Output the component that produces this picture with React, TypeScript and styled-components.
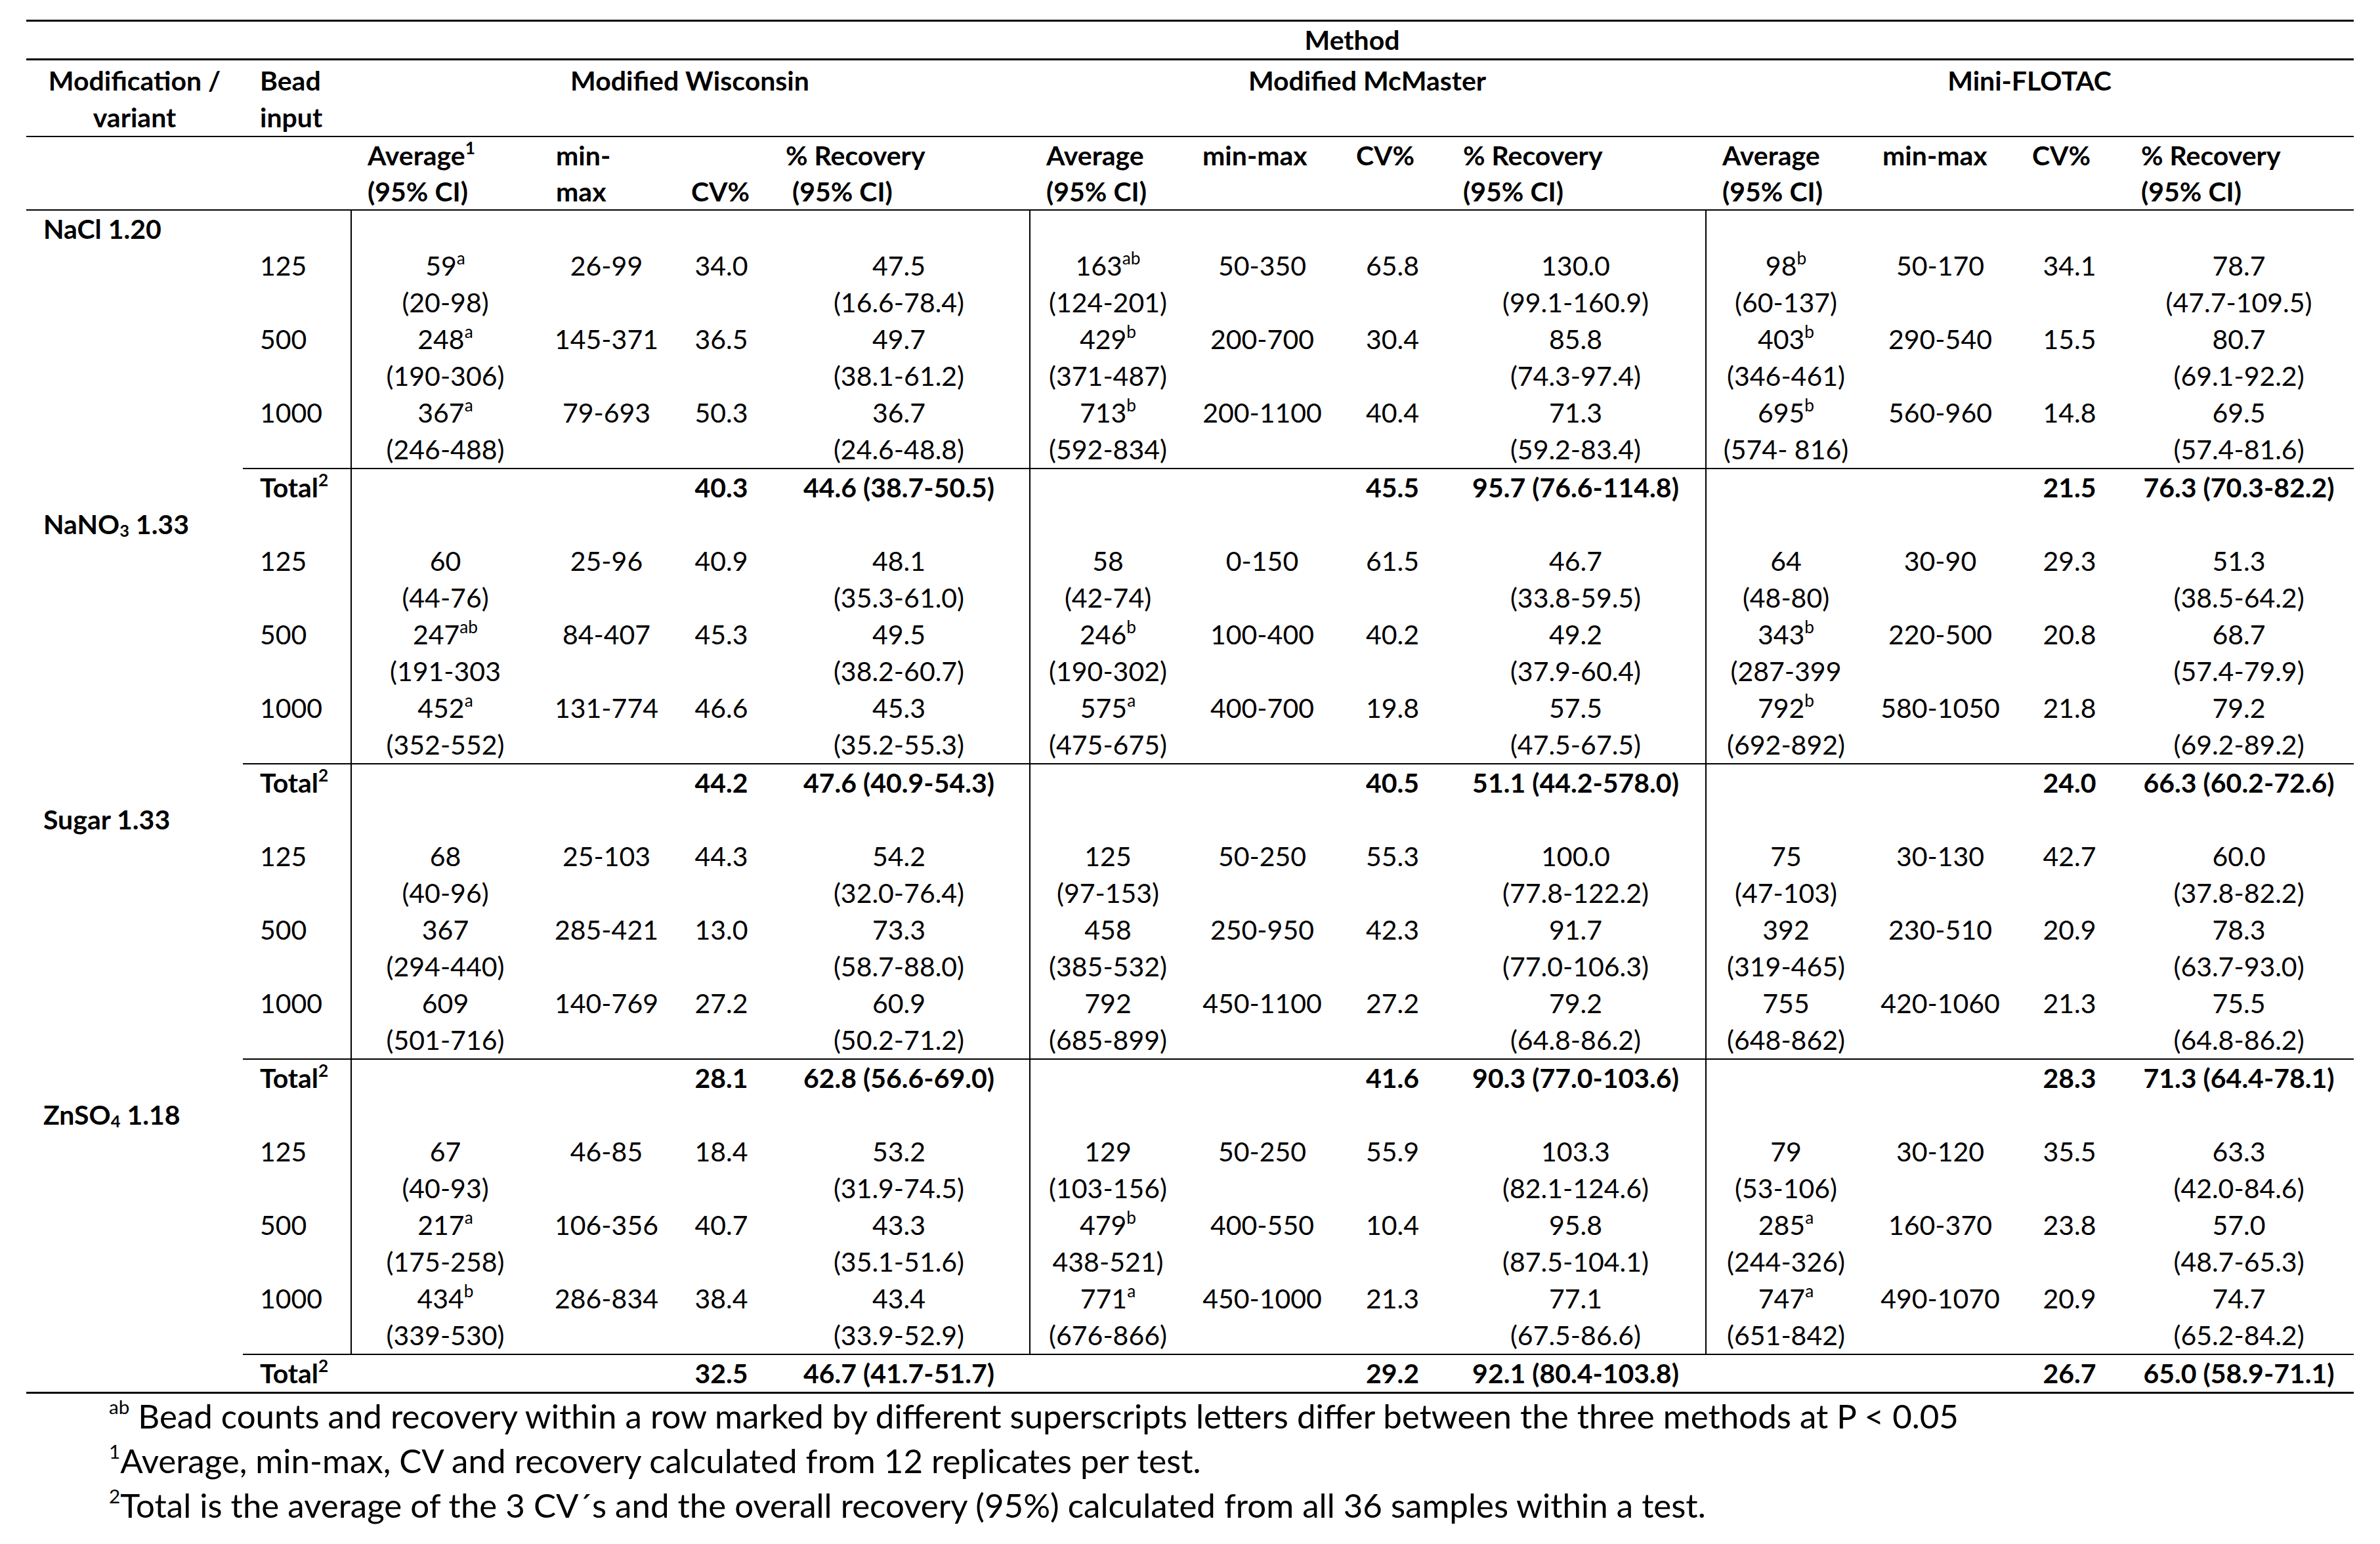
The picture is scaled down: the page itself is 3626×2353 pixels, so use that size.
import React from "react";
import styled, { createGlobalStyle } from "styled-components";

const GlobalStyle = createGlobalStyle`
  html, body {
    margin: 0;
    padding: 0;
    background: #ffffff;
  }
  body {
    font-family: Lato, "Open Sans", "Liberation Sans", sans-serif;
    color: #000;
  }
`;

const Page = styled.div`
  padding: 30px 0 0 40px;
  width: 3546px;
`;

const Table = styled.table`
  table-layout: fixed;
  width: 3546px;
  border-collapse: separate;
  border-spacing: 0;
  border-top: 3px solid #000;
  font-family: Lato, "Open Sans", sans-serif;
  font-size: 41px;
  line-height: 56px;
  color: #000;
`;

const Col = styled.col<{ $w: number }>`
  width: ${(p) => p.$w}px;
`;

const HeadCell = styled.th<{
  $align?: "left" | "center";
  $valign?: "top" | "bottom";
  $rule?: number;
  $padTop?: number;
  $lh?: number;
}>`
  font-weight: 700;
  text-align: ${(p) => p.$align ?? "left"};
  vertical-align: ${(p) => p.$valign ?? "top"};
  padding: ${(p) => p.$padTop ?? 0}px 0 0 ${(p) => (p.$align === "center" ? 0 : 26)}px;
  border-bottom: ${(p) => p.$rule ?? 2}px solid #000;
  white-space: nowrap;
  line-height: ${(p) => p.$lh ?? 56}px;
`;

const BodyCell = styled.td<{
  $divider?: boolean;
  $rule?: boolean;
  $bottom?: boolean;
  $bold?: boolean;
  $left?: number;
}>`
  padding: 0 0 0 ${(p) => p.$left ?? 0}px;
  text-align: ${(p) => (p.$left !== undefined ? "left" : "center")};
  vertical-align: top;
  white-space: nowrap;
  font-weight: ${(p) => (p.$bold ? 700 : 400)};
  border-left: ${(p) => (p.$divider ? "2px solid #000" : "none")};
  border-top: ${(p) => (p.$rule ? "2px solid #000" : "none")};
  border-bottom: ${(p) => (p.$bottom ? "3px solid #000" : "none")};
`;

const Sup = styled.sup`
  font-size: 0.64em;
  line-height: 0;
  vertical-align: baseline;
  position: relative;
  top: -0.65em;
`;

const Sub = styled.sub`
  font-size: 0.62em;
  line-height: 0;
  vertical-align: baseline;
  position: relative;
  top: 0.15em;
`;

const Notes = styled.div`
  padding-left: 126px;
  font-family: Lato, "Open Sans", sans-serif;
  font-size: 51px;
  line-height: 68px;
  color: #000;
`;

const NoteLine = styled.div`
  white-space: nowrap;
`;

const NoteSup = styled.sup`
  font-size: 0.58em;
  line-height: 0;
  vertical-align: baseline;
  position: relative;
  top: -0.75em;
`;

const WIDTHS = [
  [287, 206, 144, 397],
  [238, 234, 163, 395],
  [244, 228, 166, 350],
];

type Group = {
  label: React.ReactNode;
  rows: { bead: string; cells: string[] }[];
  totals: string[];
};

const GROUPS: Group[] = [
  {
    label: <>NaCl 1.20</>,
    rows: [
      {
        bead: "125",
        cells: [
          "59|a|(20-98)|26-99|34.0|47.5|(16.6-78.4)",
          "163|ab|(124-201)|50-350|65.8|130.0|(99.1-160.9)",
          "98|b|(60-137)|50-170|34.1|78.7|(47.7-109.5)",
        ],
      },
      {
        bead: "500",
        cells: [
          "248|a|(190-306)|145-371|36.5|49.7|(38.1-61.2)",
          "429|b|(371-487)|200-700|30.4|85.8|(74.3-97.4)",
          "403|b|(346-461)|290-540|15.5|80.7|(69.1-92.2)",
        ],
      },
      {
        bead: "1000",
        cells: [
          "367|a|(246-488)|79-693|50.3|36.7|(24.6-48.8)",
          "713|b|(592-834)|200-1100|40.4|71.3|(59.2-83.4)",
          "695|b|(574- 816)|560-960|14.8|69.5|(57.4-81.6)",
        ],
      },
    ],
    totals: ["40.3|44.6 (38.7-50.5)", "45.5|95.7 (76.6-114.8)", "21.5|76.3 (70.3-82.2)"],
  },
  {
    label: (
      <>
        NaNO<Sub>3</Sub> 1.33
      </>
    ),
    rows: [
      {
        bead: "125",
        cells: [
          "60||(44-76)|25-96|40.9|48.1|(35.3-61.0)",
          "58||(42-74)|0-150|61.5|46.7|(33.8-59.5)",
          "64||(48-80)|30-90|29.3|51.3|(38.5-64.2)",
        ],
      },
      {
        bead: "500",
        cells: [
          "247|ab|(191-303|84-407|45.3|49.5|(38.2-60.7)",
          "246|b|(190-302)|100-400|40.2|49.2|(37.9-60.4)",
          "343|b|(287-399|220-500|20.8|68.7|(57.4-79.9)",
        ],
      },
      {
        bead: "1000",
        cells: [
          "452|a|(352-552)|131-774|46.6|45.3|(35.2-55.3)",
          "575|a|(475-675)|400-700|19.8|57.5|(47.5-67.5)",
          "792|b|(692-892)|580-1050|21.8|79.2|(69.2-89.2)",
        ],
      },
    ],
    totals: ["44.2|47.6 (40.9-54.3)", "40.5|51.1 (44.2-578.0)", "24.0|66.3 (60.2-72.6)"],
  },
  {
    label: <>Sugar 1.33</>,
    rows: [
      {
        bead: "125",
        cells: [
          "68||(40-96)|25-103|44.3|54.2|(32.0-76.4)",
          "125||(97-153)|50-250|55.3|100.0|(77.8-122.2)",
          "75||(47-103)|30-130|42.7|60.0|(37.8-82.2)",
        ],
      },
      {
        bead: "500",
        cells: [
          "367||(294-440)|285-421|13.0|73.3|(58.7-88.0)",
          "458||(385-532)|250-950|42.3|91.7|(77.0-106.3)",
          "392||(319-465)|230-510|20.9|78.3|(63.7-93.0)",
        ],
      },
      {
        bead: "1000",
        cells: [
          "609||(501-716)|140-769|27.2|60.9|(50.2-71.2)",
          "792||(685-899)|450-1100|27.2|79.2|(64.8-86.2)",
          "755||(648-862)|420-1060|21.3|75.5|(64.8-86.2)",
        ],
      },
    ],
    totals: ["28.1|62.8 (56.6-69.0)", "41.6|90.3 (77.0-103.6)", "28.3|71.3 (64.4-78.1)"],
  },
  {
    label: (
      <>
        ZnSO<Sub>4</Sub> 1.18
      </>
    ),
    rows: [
      {
        bead: "125",
        cells: [
          "67||(40-93)|46-85|18.4|53.2|(31.9-74.5)",
          "129||(103-156)|50-250|55.9|103.3|(82.1-124.6)",
          "79||(53-106)|30-120|35.5|63.3|(42.0-84.6)",
        ],
      },
      {
        bead: "500",
        cells: [
          "217|a|(175-258)|106-356|40.7|43.3|(35.1-51.6)",
          "479|b|438-521)|400-550|10.4|95.8|(87.5-104.1)",
          "285|a|(244-326)|160-370|23.8|57.0|(48.7-65.3)",
        ],
      },
      {
        bead: "1000",
        cells: [
          "434|b|(339-530)|286-834|38.4|43.4|(33.9-52.9)",
          "771|a|(676-866)|450-1000|21.3|77.1|(67.5-86.6)",
          "747|a|(651-842)|490-1070|20.9|74.7|(65.2-84.2)",
        ],
      },
    ],
    totals: ["32.5|46.7 (41.7-51.7)", "29.2|92.1 (80.4-103.8)", "26.7|65.0 (58.9-71.1)"],
  },
];

function MethodCells({ spec }: { spec: string }) {
  const [avg, sup, ci, mm, cv, rec, recCi] = spec.split("|");
  return (
    <>
      <BodyCell $divider>
        {avg}
        {sup ? <Sup>{sup}</Sup> : null}
        <br />
        {ci}
      </BodyCell>
      <BodyCell>{mm}</BodyCell>
      <BodyCell>{cv}</BodyCell>
      <BodyCell>
        {rec}
        <br />
        {recCi}
      </BodyCell>
    </>
  );
}

function GroupRows({ group, last }: { group: Group; last: boolean }) {
  return (
    <>
      <tr>
        <BodyCell $left={26} $bold>
          {group.label}
        </BodyCell>
        <BodyCell />
        {[0, 1, 2].map((m) => (
          <React.Fragment key={m}>
            <BodyCell $divider />
            <BodyCell />
            <BodyCell />
            <BodyCell />
          </React.Fragment>
        ))}
      </tr>
      {group.rows.map((r) => (
        <tr key={r.bead}>
          <BodyCell />
          <BodyCell $left={26}>{r.bead}</BodyCell>
          {r.cells.map((c, i) => (
            <MethodCells key={i} spec={c} />
          ))}
        </tr>
      ))}
      <tr>
        <BodyCell $bottom={last} />
        <BodyCell $left={26} $bold $rule $bottom={last}>
          Total<Sup>2</Sup>
        </BodyCell>
        {group.totals.map((t, i) => {
          const [cv, rec] = t.split("|");
          return (
            <React.Fragment key={i}>
              <BodyCell $divider={!last} $rule $bottom={last} />
              <BodyCell $rule $bottom={last} />
              <BodyCell $rule $bottom={last} $bold>
                {cv}
              </BodyCell>
              <BodyCell $rule $bottom={last} $bold>
                {rec}
              </BodyCell>
            </React.Fragment>
          );
        })}
      </tr>
    </>
  );
}

const METHODS = ["Modified Wisconsin", "Modified McMaster", "Mini-FLOTAC"];

export default function App() {
  return (
    <>
      <GlobalStyle />
      <Page>
        <Table>
          <colgroup>
            <Col $w={330} />
            <Col $w={164} />
            {WIDTHS.flat().map((w, i) => (
              <Col key={i} $w={w} />
            ))}
          </colgroup>
          <thead>
            <tr>
              <HeadCell $rule={3} />
              <HeadCell $rule={3} />
              <HeadCell colSpan={12} $align="center" $rule={3}>
                Method
              </HeadCell>
            </tr>
            <tr>
              <HeadCell $align="center" $padTop={3}>
                Modification /
                <br />
                variant
              </HeadCell>
              <HeadCell $padTop={3}>
                Bead
                <br />
                input
              </HeadCell>
              {METHODS.map((m) => (
                <HeadCell key={m} colSpan={4} $align="center" $padTop={3}>
                  {m}
                </HeadCell>
              ))}
            </tr>
            <tr>
              <HeadCell $lh={55} />
              <HeadCell $lh={55} />
              <HeadCell $lh={55}>
                Average<Sup>1</Sup>
                <br />
                (95% CI)
              </HeadCell>
              <HeadCell $lh={55}>
                min-
                <br />
                max
              </HeadCell>
              <HeadCell $lh={55} $valign="bottom">
                CV%
              </HeadCell>
              <HeadCell $lh={55}>
                % Recovery
                <br />
                &nbsp;(95% CI)
              </HeadCell>
              {[1, 2].map((k) => (
                <React.Fragment key={k}>
                  <HeadCell $lh={55}>
                    Average
                    <br />
                    (95% CI)
                  </HeadCell>
                  <HeadCell $lh={55}>min-max</HeadCell>
                  <HeadCell $lh={55}>CV%</HeadCell>
                  <HeadCell $lh={55}>
                    % Recovery
                    <br />
                    (95% CI)
                  </HeadCell>
                </React.Fragment>
              ))}
            </tr>
          </thead>
          <tbody>
            {GROUPS.map((g, i) => (
              <GroupRows key={i} group={g} last={i === GROUPS.length - 1} />
            ))}
          </tbody>
        </Table>
        <Notes>
          <NoteLine>
            <NoteSup>ab</NoteSup> Bead counts and recovery within a row marked by different superscripts
            letters differ between the three methods at P &lt; 0.05
          </NoteLine>
          <NoteLine>
            <NoteSup>1</NoteSup>Average, min-max, CV and recovery calculated from 12 replicates per test.
          </NoteLine>
          <NoteLine>
            <NoteSup>2</NoteSup>Total is the average of the 3 CV´s and the overall recovery (95%) calculated
            from all 36 samples within a test.
          </NoteLine>
        </Notes>
      </Page>
    </>
  );
}
